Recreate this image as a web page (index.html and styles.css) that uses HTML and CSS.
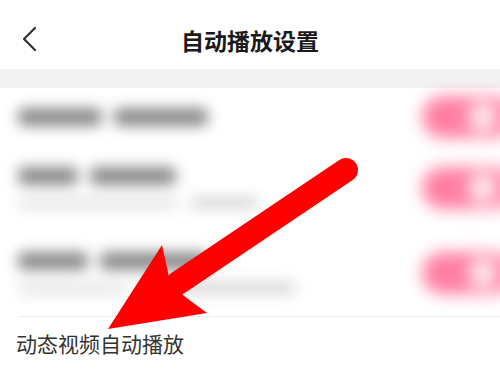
FILE: index.html
```html
<!DOCTYPE html>
<html lang="zh-CN">
<head>
  <meta charset="UTF-8" />
  <meta name="viewport" content="width=device-width, initial-scale=1.0"/>
  <title>自动播放设置</title>
  <link rel="stylesheet" href="styles.css">
</head>
<body>

<header class="nav">
  <svg class="back" width="20" height="30" viewBox="0 0 20 30">
    <polyline points="13,4 2,15 13,26" fill="none" stroke="#333" stroke-width="2.2" stroke-linecap="round" stroke-linejoin="round"/>
  </svg>
  <div class="nav-title">自动播放设置</div>
</header>

<div class="band"></div>

<div class="list">
  <div class="item item-1">
    <div class="info">
      <div class="bars title-bars"><span style="width:84px"></span><span style="width:94px"></span></div>
    </div>
    <div class="switch"><i></i></div>
  </div>
  <div class="item item-2">
    <div class="info">
      <div class="bars title-bars"><span style="width:60px"></span><span style="width:86px"></span></div>
      <div class="bars sub-bars"><span style="width:160px"></span><span class="dark" style="width:68px"></span></div>
    </div>
    <div class="switch"><i></i></div>
  </div>
  <div class="item item-3">
    <div class="info">
      <div class="bars title-bars"><span style="width:70px"></span><span style="width:108px"></span></div>
      <div class="bars sub-bars"><span style="width:110px"></span><span class="dark" style="width:156px"></span></div>
    </div>
    <div class="switch"><i></i></div>
  </div>
  <div class="item item-plain">
    <div class="label">动态视频自动播放</div>
  </div>
</div>

<svg class="arrow" width="500" height="376" viewBox="0 0 500 376">
  <line x1="346" y1="170" x2="178" y2="283" stroke="#ff0000" stroke-width="24" stroke-linecap="round"/>
  <polygon points="108,329 162,245 169,277 184,296 207,313" fill="#ff0000"/>
</svg>

</body>
</html>
```

FILE: styles.css
```css
body {
  margin: 0;
  padding: 0;
  width: 500px;
  height: 376px;
  overflow: hidden;
  background: #fff;
  font-family: "Noto Sans CJK SC", "Noto Sans", sans-serif;
  color: #333;
  position: relative;
}
.nav {
  height: 69px;
  display: flex;
  align-items: center;
  justify-content: center;
  position: relative;
}
.back {
  position: absolute;
  left: 22px;
  top: 24px;
}
.nav-title {
  font-size: 23px;
  font-weight: bold;
  color: #1a1a1a;
  margin-top: 10px;
}
.band {
  height: 19px;
  background: #f2f2f2;
}
.list {
  padding-left: 18px;
}
.item {
  display: flex;
  align-items: center;
  justify-content: space-between;
}
.item-1 { height: 58px; }
.item-2 { height: 84px; }
.item-3 { height: 86px; border-bottom: 1px solid #eeeeee; }
.item-plain { height: 60px; align-items: flex-start; }
.info {
  display: flex;
  flex-direction: column;
  gap: 12px;
  filter: blur(7px);
}
.bars {
  display: flex;
  gap: 12px;
}
.title-bars span {
  height: 18px;
  background: #8a8a8a;
  border-radius: 6px;
}
.sub-bars span {
  height: 12px;
  background: #e6e6e6;
  border-radius: 6px;
}
.sub-bars .dark { background: #d8d8d8; }
.switch {
  width: 92px;
  height: 42px;
  margin-right: -14px;
  border-radius: 21px;
  background: #ff7fa3;
  position: relative;
  filter: blur(8px);
}
.switch i {
  position: absolute;
  right: 16px;
  top: 6px;
  width: 30px;
  height: 30px;
  border-radius: 50%;
  background: #ffe6ee;
}
.label {
  font-size: 21px;
  color: #333;
  margin-top: 11px;
  margin-left: -2px;
}
.arrow {
  position: absolute;
  left: 0;
  top: 0;
}
```
